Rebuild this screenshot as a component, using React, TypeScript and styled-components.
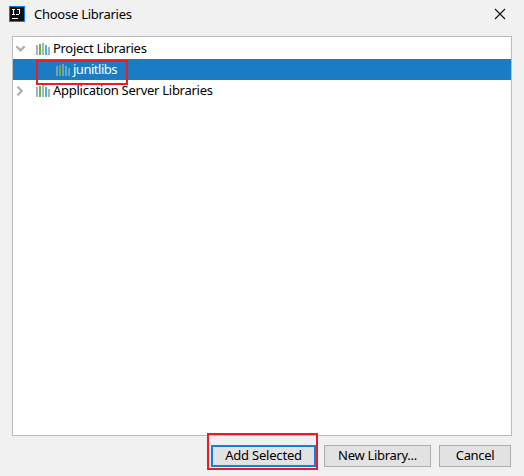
import React from 'react';
import styled, { createGlobalStyle } from 'styled-components';

const Global = createGlobalStyle`
  * { box-sizing: border-box; }
  body { margin: 0; background: #f1f1f1; overflow: hidden; }
`;

const Dialog = styled.main`
  position: relative;
  width: 524px;
  height: 476px;
  display: flex;
  flex-direction: column;
  background: #f1f1f1;
  color: #000;
  font: 13px/21px 'Noto Sans', sans-serif;
`;

const TitleBar = styled.header`
  height: 36px;
  flex: none;
  display: flex;
  align-items: flex-start;
  padding: 6px 18px 0 9px;
`;

const Title = styled.h1`
  flex: 1;
  margin: -3px 0 0 9px;
  font-size: 13px;
  line-height: 22px;
  font-weight: 400;
  letter-spacing: -0.25px;
`;

const CloseButton = styled.button`
  width: 12px;
  height: 12px;
  margin-top: 2px;
  padding: 0;
  border: 0;
  background: none;
  display: flex;
`;

const Tree = styled.section`
  width: 500px;
  height: 400px;
  flex: none;
  margin-left: 12px;
  padding-top: 1px;
  border: 1px solid #bcbcbc;
  background: #fff;
`;

const Row = styled.div<{ $selected?: boolean }>`
  height: 21px;
  display: flex;
  align-items: center;
  padding-left: ${p => (p.$selected ? 43 : 2)}px;
  background: ${p => (p.$selected ? '#1a7dc4' : '#fff')};
  color: ${p => (p.$selected ? '#fff' : '#000')};
`;

const Label = styled.span<{ $spacing: number }>`
  margin-left: 3px;
  white-space: nowrap;
  letter-spacing: ${p => p.$spacing}px;
`;

const Arrow = styled.svg`
  width: 12px;
  height: 12px;
  margin-right: 9px;
  flex: none;
`;

const Actions = styled.footer`
  display: flex;
  justify-content: flex-end;
  gap: 8px;
  padding: 9px 13px 0 0;
`;

const Button = styled.button<{ $width: number; $primary?: boolean; $spacing: number }>`
  width: ${p => p.$width}px;
  height: 22px;
  padding: 0 0 2px;
  display: flex;
  align-items: center;
  justify-content: center;
  border: ${p => (p.$primary ? '2px solid #0f82dc' : '1px solid #adadad')};
  background: #e2e2e2;
  color: #000;
  font: 13px/16px 'Noto Sans', sans-serif;
  letter-spacing: ${p => p.$spacing}px;
  white-space: nowrap;
`;

const Highlight = styled.div<{ $x: number; $y: number; $w: number; $h: number }>`
  position: absolute;
  left: ${p => p.$x}px;
  top: ${p => p.$y}px;
  width: ${p => p.$w}px;
  height: ${p => p.$h}px;
  border: 2px solid #ed1c24;
  pointer-events: none;
`;

function LibraryIcon({ selected = false }: { selected?: boolean }) {
  const gray = selected ? '#7d9cb5' : '#a9b1b7';
  return (
    <svg width="14" height="12" viewBox="0 0 14 12" shapeRendering="crispEdges">
      <path fill={gray} d="M0 2h2v10H0zM6 0h2v12H6zM12 4h2v8h-2z" />
      <path fill="#62b543" d="M3 1h2v11H3z" />
      <path fill="#40b6e0" d="M9 2h2v10H9z" />
    </svg>
  );
}

function AppIcon() {
  return (
    <svg width="16" height="16" viewBox="0 0 16 16" shapeRendering="crispEdges">
      <path fill="#087cf0" d="M0 0h16v16H0z" />
      <path fill="#101010" d="M1 1h14v14H1z" />
      <path
        d="M3 3.5h3M4.5 3.5v5M3 8.5h3M7.5 3.5H11M10.5 3.5v4M7 8.5h3M3 12.5h6"
        fill="none"
        stroke="#fff"
      />
    </svg>
  );
}

export default function App() {
  return (
    <>
      <Global />
      <Dialog>
        <TitleBar>
          <AppIcon />
          <Title>Choose Libraries</Title>
          <CloseButton aria-label="Close">
            <svg width="12" height="12" viewBox="0 0 12 12">
              <path d="M1 1l10 10M11 1L1 11" stroke="#111" strokeWidth="1.1" />
            </svg>
          </CloseButton>
        </TitleBar>
        <Tree>
          <Row>
            <Arrow viewBox="0 0 12 12"><path d="M1.3 3.2l4.2 4.2 4.2-4.2" fill="none" stroke="#adadad" strokeWidth="2.2" /></Arrow>
            <LibraryIcon />
            <Label $spacing={-0.3}>Project Libraries</Label>
          </Row>
          <Row $selected>
            <LibraryIcon selected />
            <Label $spacing={-0.48}>junitlibs</Label>
          </Row>
          <Row>
            <Arrow viewBox="0 0 12 12"><path d="M2.5 1.8l4.2 4.2-4.2 4.2" fill="none" stroke="#adadad" strokeWidth="2.2" /></Arrow>
            <LibraryIcon />
            <Label $spacing={-0.27}>Application Server Libraries</Label>
          </Row>
        </Tree>
        <Actions>
          <Button $width={105} $primary $spacing={-0.2}>Add Selected</Button>
          <Button $width={107} $spacing={-0.3}>New Library...</Button>
          <Button $width={72} $spacing={-0.35}>Cancel</Button>
        </Actions>
        <Highlight $x={36} $y={60} $w={92} $h={25} />
        <Highlight $x={207} $y={433} $w={111} $h={37} />
      </Dialog>
    </>
  );
}
